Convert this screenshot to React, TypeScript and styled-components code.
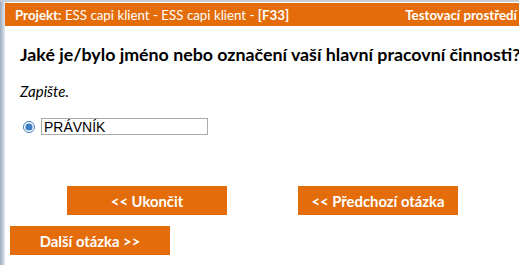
import * as React from 'react';
import styled, { createGlobalStyle } from 'styled-components';

const GlobalStyle = createGlobalStyle`
  html, body {
    margin: 0;
    padding: 0;
    background: #ffffff;
    overflow: hidden;
  }
  body {
    font-family: Lato, "Open Sans", sans-serif;
  }
`;

const Frame = styled.div`
  display: flex;
  width: 519px;
  height: 265px;
  overflow: hidden;
  border-top: 2px solid #c9ced4;
  box-sizing: border-box;
`;

const WindowEdge = styled.div`
  flex: 0 0 5px;
  background: linear-gradient(to right, #9aa9ba, #c6d0db 60%, #e4e8ec);
`;

const Content = styled.div`
  flex: 1;
  display: flex;
  flex-direction: column;
  min-width: 0;
`;

const Header = styled.div`
  margin-top: 1px;
  height: 23px;
  background: #e46c0a;
  color: #ffffff;
  display: flex;
  align-items: center;
  justify-content: space-between;
  padding: 0 2px 0 10px;
  font-size: 13.3px;
  white-space: nowrap;
`;

const Strong = styled.span`
  font-weight: 700;
`;

const Body = styled.div`
  padding-left: 15px;
  display: flex;
  flex-direction: column;
`;

const Question = styled.h1`
  margin: 18px 0 0;
  font-size: 17.8px;
  line-height: 20px;
  font-weight: 700;
  color: #000000;
  white-space: nowrap;
`;

const Hint = styled.p`
  margin: 18px 0 0;
  font-size: 15px;
  line-height: 18px;
  font-style: italic;
  color: #000000;
`;

const AnswerRow = styled.label`
  margin-top: 18px;
  display: flex;
  align-items: center;
  gap: 6px;
  padding-left: 3px;
`;

const Radio = styled.input.attrs({ type: 'radio' })`
  width: 12px;
  height: 12px;
  margin: 0;
  accent-color: #3c7fc0;
`;

const TextInput = styled.input.attrs({ type: 'text' })`
  width: 167px;
  height: 17px;
  box-sizing: border-box;
  border: 1px solid #a9a9a9;
  padding: 0 2px;
  font-family: "Liberation Sans", Arial, sans-serif;
  font-size: 14px;
  color: #000000;
  outline: none;
`;

const ButtonRow = styled.div<{ $indent: number; $top: number }>`
  display: flex;
  gap: 71px;
  margin-top: ${(p) => p.$top}px;
  padding-left: ${(p) => p.$indent}px;
`;

const NavButton = styled.button.attrs({ type: 'button' })`
  width: 160px;
  height: 29px;
  border: none;
  background: #e46c0a;
  color: #ffffff;
  font-family: Lato, "Open Sans", sans-serif;
  font-size: 14.8px;
  font-weight: 700;
  padding: 0;
  cursor: pointer;
`;

export default function App() {
  const [answer, setAnswer] = React.useState('PRÁVNÍK');
  return (
    <>
      <GlobalStyle />
      <Frame>
        <WindowEdge />
        <Content>
          <Header>
            <span>
              <Strong>Projekt:</Strong> ESS capi klient - ESS capi klient - <Strong>[F33]</Strong>
            </span>
            <Strong>Testovací prostředí</Strong>
          </Header>
          <Body>
            <Question>Jaké je/bylo jméno nebo označení vaší hlavní pracovní činnosti?</Question>
            <Hint>Zapište.</Hint>
            <AnswerRow>
              <Radio name="odpoved" defaultChecked />
              <TextInput value={answer} onChange={(e) => setAnswer(e.target.value)} />
            </AnswerRow>
          </Body>
          <ButtonRow $indent={62} $top={51}>
            <NavButton>&lt;&lt; Ukončit</NavButton>
            <NavButton>&lt;&lt; Předchozí otázka</NavButton>
          </ButtonRow>
          <ButtonRow $indent={5} $top={11}>
            <NavButton>Další otázka &gt;&gt;</NavButton>
          </ButtonRow>
        </Content>
      </Frame>
    </>
  );
}
